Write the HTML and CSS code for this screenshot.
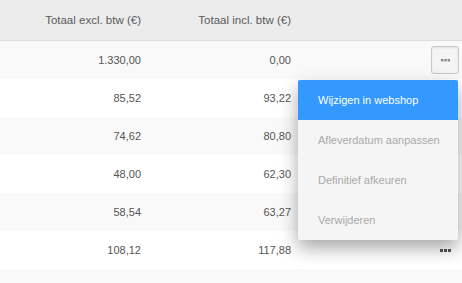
FILE: index.html
```html
<!DOCTYPE html>
<html lang="nl">
<head>
    <meta charset="UTF-8">
    <title>Bestellingen</title>
    <link rel="stylesheet" href="styles.css">
</head>
<body>
    <div class="orders">
        <!-- Header -->
        <div class="row head">
            <div class="cell num">Totaal excl. btw (€)</div>
            <div class="cell num">Totaal incl. btw (€)</div>
            <div class="cell actions"></div>
        </div>

        <!-- Rows -->
        <div class="row odd open">
            <div class="cell num">1.330,00</div>
            <div class="cell num">0,00</div>
            <div class="cell actions">
                <button class="more active">
                    <svg width="9" height="3" viewBox="0 0 9 3"><rect x="0" y="0" width="2.4" height="2.4"/><rect x="3.3" y="0" width="2.4" height="2.4"/><rect x="6.6" y="0" width="2.4" height="2.4"/></svg>
                </button>
                <ul class="menu">
                    <li class="selected">Wijzigen in webshop</li>
                    <li>Afleverdatum aanpassen</li>
                    <li>Definitief afkeuren</li>
                    <li>Verwijderen</li>
                </ul>
            </div>
        </div>
        <div class="row">
            <div class="cell num">85,52</div>
            <div class="cell num">93,22</div>
            <div class="cell actions"><button class="more"><svg width="11" height="3" viewBox="0 0 11 3"><rect x="0" y="0" width="3" height="3"/><rect x="4" y="0" width="3" height="3"/><rect x="8" y="0" width="3" height="3"/></svg></button></div>
        </div>
        <div class="row odd">
            <div class="cell num">74,62</div>
            <div class="cell num">80,80</div>
            <div class="cell actions"><button class="more"><svg width="11" height="3" viewBox="0 0 11 3"><rect x="0" y="0" width="3" height="3"/><rect x="4" y="0" width="3" height="3"/><rect x="8" y="0" width="3" height="3"/></svg></button></div>
        </div>
        <div class="row">
            <div class="cell num">48,00</div>
            <div class="cell num">62,30</div>
            <div class="cell actions"><button class="more"><svg width="11" height="3" viewBox="0 0 11 3"><rect x="0" y="0" width="3" height="3"/><rect x="4" y="0" width="3" height="3"/><rect x="8" y="0" width="3" height="3"/></svg></button></div>
        </div>
        <div class="row odd">
            <div class="cell num">58,54</div>
            <div class="cell num">63,27</div>
            <div class="cell actions"><button class="more"><svg width="11" height="3" viewBox="0 0 11 3"><rect x="0" y="0" width="3" height="3"/><rect x="4" y="0" width="3" height="3"/><rect x="8" y="0" width="3" height="3"/></svg></button></div>
        </div>
        <div class="row">
            <div class="cell num">108,12</div>
            <div class="cell num">117,88</div>
            <div class="cell actions"><button class="more"><svg width="11" height="3" viewBox="0 0 11 3"><rect x="0" y="0" width="3" height="3"/><rect x="4" y="0" width="3" height="3"/><rect x="8" y="0" width="3" height="3"/></svg></button></div>
        </div>
        <div class="row odd">
            <div class="cell num"></div>
            <div class="cell num"></div>
            <div class="cell actions"></div>
        </div>
    </div>
</body>
</html>
```

FILE: styles.css
```css
html,
body {
    overflow: hidden;
}

body {
    margin: 0;
    font-family: 'Liberation Sans', Arial, sans-serif;
    background: #fff;
    color: #555;
}

.orders {
    width: 462px;
    height: 283px;
}

.row {
    display: grid;
    grid-template-columns: 155px 150px 1fr;
    height: 38px;
    background-color: #fff;
}

.row.odd {
    background-color: #f9f9f9;
}

.row.head {
    height: 40px;
    background-color: #ececec;
    border-bottom: 1px solid #dcdcdc;
}

.cell {
    display: flex;
    align-items: center;
    font-size: 11px;
}

.num {
    justify-content: flex-end;
    padding-right: 14px;
}

.head .cell {
    font-size: 11.5px;
    color: #5a5a5a;
}

.actions {
    justify-content: flex-end;
    padding-right: 3px;
    position: relative;
}

.more {
    width: 28px;
    height: 28px;
    padding: 0;
    border: 1px solid transparent;
    border-radius: 3px;
    background: transparent;
    display: flex;
    align-items: center;
    justify-content: center;
    fill: #555;
}

.more.active {
    border-color: #c8c8c8;
    background-color: #f4f4f4;
    box-shadow: inset 0 1px 2px rgba(0, 0, 0, 0.08);
    fill: #888;
}

.menu {
    position: absolute;
    top: 39px;
    right: 4px;
    width: 160px;
    margin: 0;
    padding: 0;
    list-style: none;
    background-color: #f5f5f5;
    border-radius: 2px;
    box-shadow: 0 8px 18px rgba(0, 0, 0, 0.35);
    z-index: 2;
}

.menu li {
    height: 40px;
    display: flex;
    align-items: center;
    padding-left: 20px;
    font-size: 11px;
    color: #aaa;
}

.menu li.selected {
    background-color: #3399ff;
    color: #fff;
    border-radius: 2px 2px 0 0;
}
```
